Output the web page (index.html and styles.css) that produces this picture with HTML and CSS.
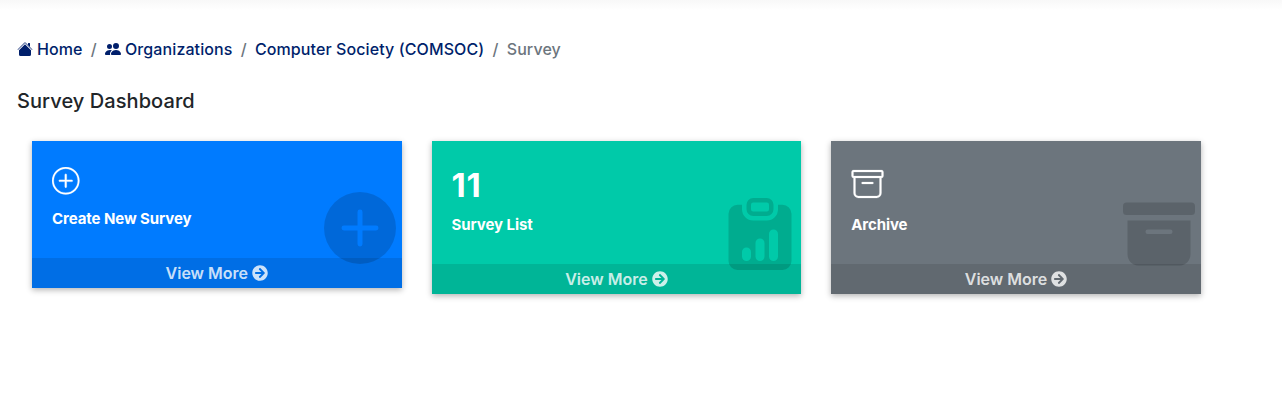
FILE: index.html
```html
<!DOCTYPE html>
<html lang="en">
<head>
<meta charset="utf-8">
<title>Survey Dashboard</title>
<link rel="stylesheet" href="styles.css">
</head>
<body>
<svg class="sprite" aria-hidden="true">
  <symbol id="arrow" viewBox="0 0 512 512"><path d="M256 8c137 0 248 111 248 248S393 504 256 504 8 393 8 256 119 8 256 8zm-28.9 143.6l75.5 72.4H120c-13.3 0-24 10.7-24 24v16c0 13.3 10.7 24 24 24h182.6l-75.5 72.4c-9.7 9.3-9.9 24.8-.4 34.3l11 10.9c9.4 9.4 24.6 9.4 33.9 0L404.3 273c9.4-9.4 9.4-24.6 0-33.9L271.6 106.3c-9.4-9.4-24.6-9.4-33.9 0l-11 10.9c-9.5 9.6-9.3 25.1.4 34.4z"/></symbol>
</svg>
<div class="topbar"></div>
<main class="page">
  <nav class="breadcrumb">
    <a class="crumb" href="#"><svg class="crumb-icon" viewBox="0 0 16 16"><path d="m8 3.293 6 6V13.5a1.5 1.5 0 0 1-1.5 1.5h-9A1.5 1.5 0 0 1 2 13.5V9.293l6-6zm5-.793V6l-2-2V2.500a.5.5 0 0 1 .5-.5h1a.5.5 0 0 1 .5.5z"/><path class="roof" d="M7.293 1.500a1 1 0 0 1 1.414 0l6.647 6.646a.5.5 0 0 1-.708.708L8 2.207 1.354 8.854a.5.5 0 1 1-.708-.708L7.293 1.500z"/></svg>Home</a>
    <span class="slash">/</span>
    <a class="crumb" href="#"><svg class="crumb-icon" viewBox="0 0 16 16"><path d="M7 14s-1 0-1-1 1-4 5-4 5 3 5 4-1 1-1 1H7zm4-6a3 3 0 1 0 0-6 3 3 0 0 0 0 6zM5.216 14A2.238 2.238 0 0 1 5 13c0-1.355.68-2.750 1.936-3.720A6.325 6.325 0 0 0 5 9c-4 0-5 3-5 4s1 1 1 1h4.216zM4.500 8a2.500 2.500 0 1 0 0-5 2.500 2.500 0 0 0 0 5z"/></svg>Organizations</a>
    <span class="slash">/</span>
    <a class="crumb" href="#">Computer Society (COMSOC)</a>
    <span class="slash">/</span>
    <span class="current">Survey</span>
  </nav>
  <h1 class="title">Survey Dashboard</h1>
  <section class="cards">
    <article class="card card-blue">
      <div class="card-body">
        <svg class="plus-icon" viewBox="0 0 16 16"><path d="M8 15A7 7 0 1 1 8 1a7 7 0 0 1 0 14zm0 1A8 8 0 1 0 8 0a8 8 0 0 0 0 16z"/><path class="plus-bars" d="M8 4a.5.5 0 0 1 .5.5v3h3a.5.5 0 0 1 0 1h-3v3a.5.5 0 0 1-1 0v-3h-3a.5.5 0 0 1 0-1h3v-3A.5.5 0 0 1 8 4z"/></svg>
        <p class="label">Create New Survey</p>
      </div>
      <svg class="watermark" viewBox="0 0 16 16"><path d="M16 8A8 8 0 1 1 0 8a8 8 0 0 1 16 0zM8.550 4.450a.55.55 0 0 0-1.100 0v3h-3a.55.55 0 0 0 0 1.100h3v3a.55.55 0 0 0 1.100 0v-3h3a.55.55 0 0 0 0-1.100h-3v-3z"/></svg>
      <a class="more" href="#">View More <svg class="arrow"><use href="#arrow"/></svg></a>
    </article>
    <article class="card card-green">
      <div class="card-body">
        <p class="count">11</p>
        <p class="label">Survey List</p>
      </div>
      <svg class="watermark" viewBox="0 0 16 16"><path fill-rule="evenodd" d="M6.500 0A1.500 1.500 0 0 0 5 1.500v1A1.500 1.500 0 0 0 6.500 4h3A1.500 1.500 0 0 0 11 2.500v-1A1.500 1.500 0 0 0 9.500 0h-3zm3 1a.5.5 0 0 1 .5.5v1a.5.5 0 0 1-.5.5h-3a.5.5 0 0 1-.5-.5v-1a.5.5 0 0 1 .5-.5h3z"/><path d="M4 1.500H3a2 2 0 0 0-2 2V14a2 2 0 0 0 2 2h10a2 2 0 0 0 2-2V3.500a2 2 0 0 0-2-2h-1v1A2.500 2.500 0 0 1 9.500 5h-3A2.500 2.500 0 0 1 4 2.500v-1zM10 8a1 1 0 1 1 2 0v5a1 1 0 1 1-2 0V8zm-6 4a1 1 0 1 1 2 0v1a1 1 0 1 1-2 0v-1zm4-3a1 1 0 0 1 1 1v3a1 1 0 1 1-2 0v-3a1 1 0 0 1 1-1z"/></svg>
      <a class="more" href="#">View More <svg class="arrow"><use href="#arrow"/></svg></a>
    </article>
    <article class="card card-gray">
      <div class="card-body">
        <svg class="archive-icon" viewBox="0 0 16 16"><path d="M0 2a1 1 0 0 1 1-1h14a1 1 0 0 1 1 1v2a1 1 0 0 1-1 1v7.500a2.500 2.500 0 0 1-2.500 2.500h-9A2.500 2.500 0 0 1 1 12.500V5a1 1 0 0 1-1-1V2zm2 3v7.500A1.500 1.500 0 0 0 3.500 14h9a1.500 1.500 0 0 0 1.500-1.500V5H2zm13-3H1v2h14V2zM5 7.500a.5.5 0 0 1 .5-.5h5a.5.5 0 0 1 0 1h-5a.5.5 0 0 1-.5-.5z"/></svg>
        <p class="label">Archive</p>
      </div>
      <svg class="watermark" viewBox="0 0 16 16"><path d="M12.643 15C13.979 15 15 13.845 15 12.500V5H1v7.500C1 13.845 2.021 15 3.357 15h9.286zM5.500 7h5a.5.5 0 0 1 0 1h-5a.5.5 0 0 1 0-1zM.8 1a.8.8 0 0 0-.8.8V3a.8.8 0 0 0 .8.8h14.400A.8.8 0 0 0 16 3V1.800a.8.8 0 0 0-.8-.8H.8z"/></svg>
      <a class="more" href="#">View More <svg class="arrow"><use href="#arrow"/></svg></a>
    </article>
  </section>
</main>
</body>
</html>
```
FILE: styles.css
```css
* { box-sizing: border-box; }
body {
  margin: 0;
  min-height: 418px;
  background: #fff;
  color: #212529;
  font-family: Inter, sans-serif;
  font-size: 16px;
  font-weight: 500;
  line-height: 24px;
}
a { text-decoration: none; }
p, h1 { margin: 0; }
svg { fill: currentColor; }
.sprite { display: none; }
.topbar { height: 10px; background: linear-gradient(#f8f8f8, #fff); }
.page { padding: 27px 17px 0; }
.breadcrumb { display: flex; letter-spacing: .1px; }
.crumb { display: flex; align-items: center; color: #001f6b; }
.crumb-icon { width: 16px; height: 16px; margin-right: 4px; }
.roof { opacity: .65; }
.slash { padding: 0 8.2px; color: #6c757d; }
.current { color: #6c757d; }
.title { margin-top: 28px; font-size: 20px; font-weight: 500; line-height: 24px; letter-spacing: .07px; }
.cards {
  display: grid;
  grid-template-columns: repeat(3, 369.6px);
  gap: 30px;
  align-items: start;
  margin: 28px 0 0 15px;
}
.card {
  position: relative;
  color: #fff;
  box-shadow: 0 2px 6px rgba(0, 0, 0, .3);
}
.card-blue { background: #007bff; }
.card-green { background: #00caa9; }
.card-gray { background: #6c757d; }
.card-body { height: 123px; padding: 25px 20px 0; }
.card-blue .card-body { height: 117px; }
.plus-icon, .archive-icon { display: block; }
.plus-icon { width: 27.5px; height: 27.5px; margin-top: 1px; stroke: currentColor; stroke-width: .12; }
.plus-bars { stroke-width: .25; }
.archive-icon { width: 33px; height: 32px; margin-top: 2px; stroke: currentColor; stroke-width: .1; }
.count { font-size: 33px; font-weight: 700; line-height: 38px; letter-spacing: .6px; }
.label { font-size: 15px; font-weight: 700; line-height: 22px; margin-top: 13.5px; letter-spacing: -.08px; }
.card-green .label { margin-top: 10px; }
.card-gray .label { margin-top: 14px; }
.watermark {
  position: absolute;
  right: 5.6px;
  bottom: 24px;
  width: 72px;
  height: 72px;
  color: rgba(0, 0, 0, .15);
}
.more {
  position: relative;
  display: flex;
  align-items: center;
  justify-content: center;
  gap: 4px;
  height: 30px;
  background: rgba(0, 0, 0, .1);
  color: rgba(255, 255, 255, .8);
  font-weight: 600;
}
.arrow { width: 16px; height: 16px; }
```
